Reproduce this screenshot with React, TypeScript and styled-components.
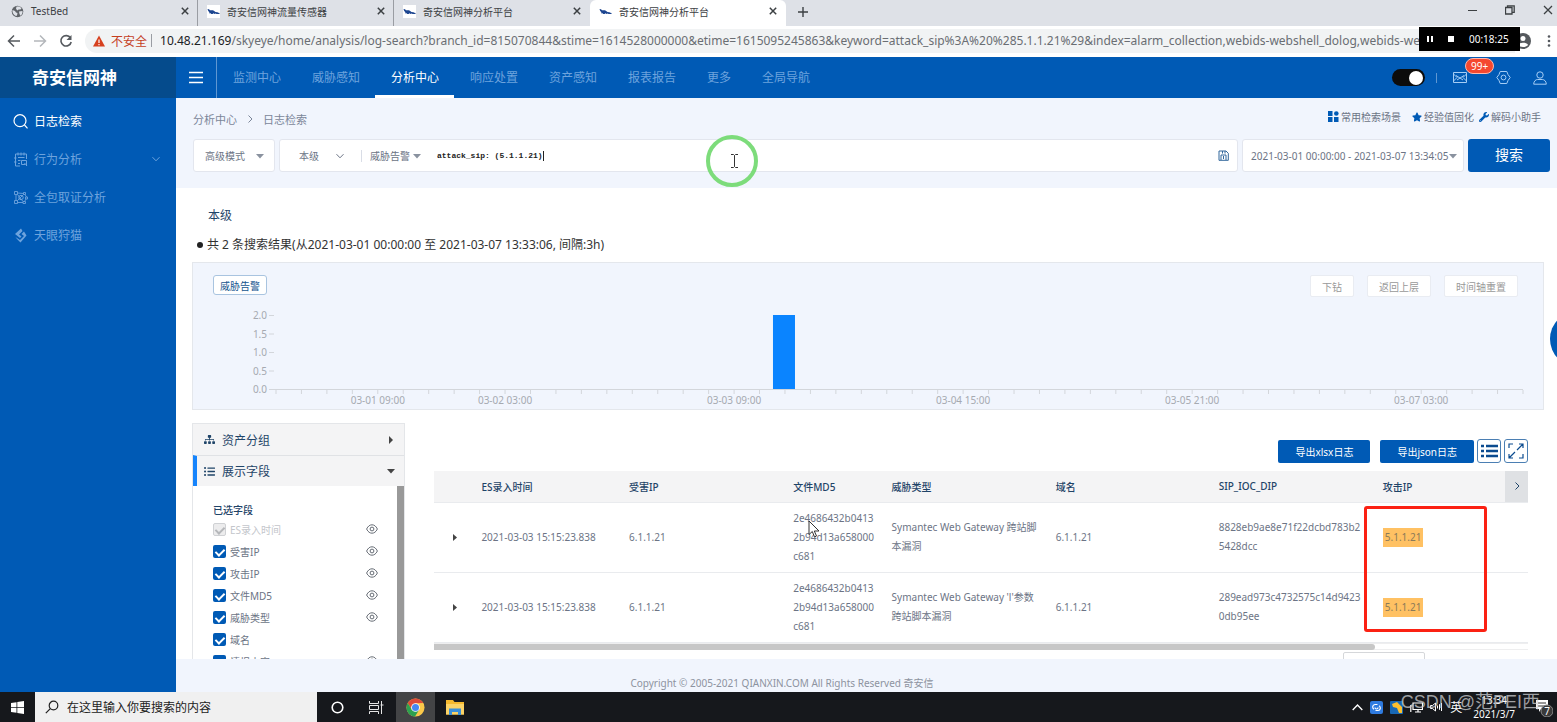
import React from "react";
import styled, { createGlobalStyle, css } from "styled-components";
import { FaListUl, FaSitemap, FaStar, FaWrench } from "react-icons/fa";

const BLUE = "#005ab5";
const PALE = "#f1f5fd";
const INK = "#1f4468";
const BODY = "#6c7485";

const Global = createGlobalStyle`
  * { box-sizing: border-box; }
  html, body, #root { height: 100%; margin: 0; }
  body {
    font-family: "Noto Sans", "Noto Sans CJK SC", sans-serif;
    font-size: 10px;
    color: ${BODY};
    overflow: hidden;
  }
  button, input, select { font: inherit; color: inherit; margin: 0; }
  a { color: inherit; text-decoration: none; }
  svg { display: block; flex: none; }
`;

const Screen = styled.div`
  display: flex;
  flex-direction: column;
  height: 100vh;
  background: #fff;
`;

const PlainButton = styled.button`
  display: flex;
  align-items: center;
  justify-content: center;
  padding: 0;
  border: 0;
  background: none;
  cursor: pointer;
`;

/* ---------- browser ---------- */

const TabStrip = styled.div`
  display: flex;
  flex: none;
  height: 26px;
  padding-left: 2px;
  background: #dee1e7;
  color: #3c4043;
`;

const Tab = styled.div<{ $active?: boolean; $divider?: boolean }>`
  display: flex;
  align-items: center;
  gap: 7px;
  width: 196px;
  padding: 0 9px 4px 9px;
  background: ${(p) => (p.$active ? "#fff" : "transparent")};
  border-radius: ${(p) => (p.$active ? "6px 6px 0 0" : "0")};
  ${(p) => p.$divider && css`box-shadow: inset -1px 0 #9a9da3;`}
`;

const TabTitle = styled.span`
  flex: 1;
  white-space: nowrap;
`;

const NewTab = styled(PlainButton)`
  width: 34px;
  height: 24px;
`;

const WindowControls = styled.div`
  display: flex;
  gap: 28px;
  align-items: center;
  height: 20px;
  margin-left: auto;
  padding-right: 4px;
`;

const AddressBar = styled.div`
  display: flex;
  flex: none;
  align-items: center;
  height: 31px;
  padding: 0 0 2px 7px;
  background: #fff;
`;

const BrowserButtons = styled.div`
  display: flex;
  gap: 12px;
  margin-right: 12px;
`;

const UrlPill = styled.div`
  display: flex;
  flex: 1;
  align-items: center;
  min-width: 0;
  height: 24px;
  padding-left: 7px;
  border-radius: 12px 0 0 12px;
  background: #f1f3f4;
  font-size: 12px;
`;

const Unsafe = styled.span`
  padding: 0 4px 0 5px;
  color: #c5401f;
`;

const UrlRule = styled.span`
  width: 1px;
  height: 13px;
  margin-right: 8px;
  background: #9a9da3;
`;

const Url = styled.span`
  flex: 1;
  min-width: 0;
  overflow: hidden;
  white-space: nowrap;
  color: #6a6e73;
  b { font-weight: 400; color: #202124; }
`;

const Recorder = styled.div`
  position: absolute;
  top: 27px;
  right: 37px;
  display: flex;
  align-items: center;
  gap: 15px;
  width: 101px;
  height: 24px;
  padding-left: 8px;
  background: #000;
  color: #fff;
`;

/* ---------- application header ---------- */

const Header = styled.header`
  display: flex;
  flex: none;
  height: 41px;
  background: ${BLUE};
  color: #fff;
`;

const Brand = styled.div`
  width: 176px;
  padding-left: 32px;
  background: #054b8c;
  font-size: 17px;
  font-weight: 700;
  line-height: 41px;
`;

const Burger = styled(PlainButton)`
  width: 41px;
  border-right: 1px solid #5f97d2;
`;

const Nav = styled.nav`
  display: flex;
`;

const NavLink = styled.a<{ $active?: boolean }>`
  padding: 0 15px 0 16px;
  border-bottom: 3px solid ${(p) => (p.$active ? "#fff" : "transparent")};
  color: ${(p) => (p.$active ? "#fff" : "#6da3dd")};
  font-size: 12px;
  line-height: 41px;
  white-space: nowrap;
`;

const HeaderTools = styled.div`
  display: flex;
  align-items: center;
  margin-left: auto;
  padding-right: 10px;
  color: #a5cdf5;
`;

const Switch = styled.input`
  appearance: none;
  display: flex;
  align-items: center;
  justify-content: flex-end;
  width: 33px;
  height: 17px;
  padding: 1px 2px;
  border-radius: 9px;
  background: #0c0c0c;
  &::before {
    content: "";
    width: 14px;
    height: 14px;
    border-radius: 50%;
    background: #fff;
  }
`;

const ToolRule = styled.span`
  width: 1px;
  height: 10px;
  margin: 0 16px 0 11px;
  background: #5f97d2;
`;

const MailButton = styled(PlainButton)`
  position: relative;
  margin-right: 29px;
`;

const Badge = styled.span`
  position: absolute;
  left: 12px;
  bottom: 9px;
  padding: 0 5px;
  border: 1px solid #ffb9ad;
  border-radius: 8px;
  background: #f5482f;
  color: #fff;
  line-height: 14px;
`;

const UserButton = styled(PlainButton)`
  margin-left: 22px;
`;

/* ---------- body ---------- */

const Body = styled.div`
  display: flex;
  flex: 1;
  min-height: 0;
`;

const Sidebar = styled.nav`
  flex: none;
  width: 176px;
  padding-top: 4px;
  background: ${BLUE};
`;

const SideLink = styled.a<{ $active?: boolean }>`
  display: flex;
  align-items: center;
  gap: 6px;
  height: 38px;
  padding: 0 16px 0 13px;
  color: ${(p) => (p.$active ? "#fff" : "#6da3dd")};
  font-size: 12px;
  span { flex: 1; }
`;

const Content = styled.main`
  display: flex;
  flex: 1;
  flex-direction: column;
  min-width: 0;
  background: ${PALE};
`;

const TopLine = styled.div`
  display: flex;
  flex: none;
  justify-content: space-between;
  align-items: center;
  height: 41px;
  padding: 0 16px 0 17px;
`;

const Crumbs = styled.div`
  display: flex;
  align-items: center;
  gap: 9px;
  color: #7b8699;
  font-size: 11px;
`;

const QuickLinks = styled.div`
  display: flex;
  gap: 5px;
  padding-bottom: 4px;
`;

const QuickLink = styled.a<{ $wide?: boolean }>`
  display: flex;
  align-items: center;
  gap: 2px;
  margin-right: ${(p) => (p.$wide ? "6px" : "0")};
  svg { color: ${BLUE}; }
`;

const SearchRow = styled.div`
  display: flex;
  flex: none;
  gap: 4px;
  padding: 0 7px 16px 17px;
`;

const box = css`
  border: 1px solid #e3e6ee;
  border-radius: 3px;
  background: #fff;
  height: 33px;
`;

const Picker = styled.label<{ $boxed?: boolean; $width: number }>`
  display: grid;
  align-items: center;
  width: ${(p) => p.$width}px;
  ${(p) => p.$boxed && box}
  select, svg { grid-area: 1 / 1; }
  svg { justify-self: end; pointer-events: none; }
`;

const Select = styled.select`
  appearance: none;
  width: 100%;
  padding: 0;
  border: 0;
  outline: 0;
  background: none;
`;

const ModePicker = styled(Picker)`
  padding: 0 10px 0 11px;
`;

const QueryBox = styled.div`
  ${box}
  position: relative;
  display: flex;
  flex: 1;
  align-items: center;
  min-width: 0;
  padding: 0 8px 0 19px;
`;

const QueryRule = styled.span`
  width: 1px;
  height: 12px;
  margin: 0 8px 0 17px;
  background: #d9dde6;
`;

const QueryEdit = styled.label`
  display: flex;
  flex: 1;
  align-items: center;
  margin-left: 16px;
`;

const QueryInput = styled.input`
  width: 22ch;
  padding: 0;
  border: 0;
  outline: 0;
  color: #222;
  font-family: "Liberation Mono", monospace;
  font-size: 8px;
  font-weight: 700;
`;

const Caret = styled.span`
  width: 1px;
  height: 10px;
  background: #222;
`;

const ClickRing = styled.div`
  position: absolute;
  left: 426px;
  top: -5px;
  display: flex;
  align-items: center;
  justify-content: center;
  width: 52px;
  height: 52px;
  padding-left: 4px;
  border: 4px solid #7ddc7b;
  border-radius: 50%;
`;

const DateButton = styled.button`
  ${box}
  display: flex;
  align-items: center;
  justify-content: space-between;
  width: 222px;
  padding: 0 6px 0 8px;
  white-space: nowrap;
`;

const SearchButton = styled.button`
  width: 82px;
  height: 33px;
  padding: 0 0 3px;
  border: 0;
  border-radius: 3px;
  background: ${BLUE};
  color: #fff;
  font-size: 14px;
`;

const Results = styled.section`
  display: flex;
  flex: 1;
  flex-direction: column;
  min-height: 0;
  padding: 18px 13px 0 16px;
  background: #fff;
  overflow: hidden;
`;

const Level = styled.h2`
  margin: 0 0 9px 16px;
  color: ${INK};
  font-size: 12px;
  font-weight: 400;
  line-height: 20px;
`;

const Summary = styled.p`
  display: flex;
  align-items: center;
  gap: 4px;
  margin: 0 0 7px 5px;
  color: #333;
  font-size: 12px;
  line-height: 20px;
  &::before {
    content: "";
    width: 6px;
    height: 6px;
    border-radius: 50%;
    background: #222;
  }
`;

const ChartCard = styled.div`
  flex: none;
  padding-top: 12px;
  border: 1px solid #e4e7ec;
  background: ${PALE};
`;

const ChartBar = styled.div`
  display: flex;
  align-items: flex-start;
  gap: 13px;
  padding: 0 25px 0 20px;
`;

const SeriesButton = styled.button`
  height: 20px;
  margin-right: auto;
  padding: 0 6px;
  border: 1px solid #a9c4e0;
  border-radius: 3px;
  background: #fff;
  color: #17568f;
`;

const ChartAction = styled.button`
  height: 22px;
  padding: 0 11px;
  border: 1px solid #e9ecf2;
  border-radius: 2px;
  background: #fff;
  color: #999;
`;

const Plot = styled.div`
  padding: 0 20px 0 83px;
  svg { overflow: visible; }
  text { font-size: 10px; fill: #a6aab1; }
`;

const Lower = styled.div`
  display: flex;
  flex: 1;
  gap: 29px;
  min-height: 0;
  margin-top: 13px;
`;

const FieldPanel = styled.aside`
  display: flex;
  flex: none;
  flex-direction: column;
  width: 213px;
  border: 1px solid #e4e6e9;
  border-bottom: 0;
`;

const PanelHead = styled.button<{ $open?: boolean }>`
  display: flex;
  flex: none;
  align-items: center;
  gap: 7px;
  height: 31px;
  padding: 0 9px 0 ${(p) => (p.$open ? "7px" : "11px")};
  border: 0;
  border-left: ${(p) => (p.$open ? "4px solid #1684fc" : "0")};
  border-top: ${(p) => (p.$open ? "1px solid #e0e2e5" : "0")};
  background: #f4f4f5;
  color: ${INK};
  font-size: 12px;
  text-align: left;
  span { flex: 1; }
`;

const FieldScroll = styled.div`
  flex: 1;
  min-height: 0;
  padding: 16px 19px 0 20px;
  border-right: 7px solid #999;
  overflow: hidden;
`;

const FieldTitle = styled.h3`
  margin: 0;
  color: ${INK};
  font-size: 10px;
  font-weight: 500;
  line-height: 16px;
`;

const FieldRow = styled.div`
  display: flex;
  align-items: center;
  justify-content: space-between;
  height: 22px;
`;

const FieldLabel = styled.label<{ $off?: boolean }>`
  display: flex;
  align-items: center;
  gap: 4px;
  color: ${(p) => (p.$off ? "#c3c6cb" : BODY)};
`;

const Check = styled.input`
  appearance: none;
  display: flex;
  justify-content: center;
  width: 13px;
  height: 13px;
  padding-top: 2px;
  border-radius: 2px;
  background: ${BLUE};
  &::before {
    content: "";
    width: 4px;
    height: 7px;
    border: solid #fff;
    border-width: 0 2px 2px 0;
    transform: rotate(45deg);
  }
  &:disabled {
    padding-top: 1px;
    border: 1px solid #cfd1d4;
    background: #ececed;
  }
  &:disabled::before { border-color: #b5b7ba; }
`;

const TableSide = styled.div`
  position: relative;
  flex: 1;
  min-width: 0;
  padding: 16px 16px 0 0;
`;

const Exports = styled.div`
  display: flex;
  justify-content: flex-end;
  align-items: center;
  gap: 3px;
  margin-bottom: 8px;
`;

const ExportButton = styled.button`
  height: 23px;
  margin-left: 7px;
  padding: 0 17px;
  border: 0;
  border-radius: 2px;
  background: ${BLUE};
  color: #fff;
`;

const ViewButton = styled(PlainButton)`
  width: 24px;
  height: 24px;
  border: 1px solid #4b7fb3;
  border-radius: 3px;
  background: #fff;
  color: #0b4b8f;
`;

const Table = styled.table`
  width: 100%;
  table-layout: fixed;
  border-collapse: collapse;
  tr { border-bottom: 1px solid #e9ebee; }
  th, td { padding: 0 8px; text-align: left; }
  th {
    height: 31px;
    background: #f4f4f5;
    color: ${INK};
    font-weight: 500;
  }
  td {
    height: 70px;
    line-height: 19px;
    overflow-wrap: anywhere;
  }
`;

const HashCell = styled.td`
  && { padding-right: 13px; }
`;

const MoreCell = styled.th`
  && { padding: 0; background: #dfe1e4; }
`;

const Mark = styled.mark`
  display: inline-block;
  padding: 0 2px;
  background: #ffc163;
  color: #8a7a58;
`;

const HScroll = styled.div`
  height: 7px;
  border: 1px solid #eeeeef;
  border-width: 1px 0;
  &::before {
    content: "";
    display: block;
    width: 86%;
    height: 6px;
    border-radius: 0 3px 3px 0;
    background: #c7c7c7;
  }
`;

const PageSize = styled.div`
  width: 82px;
  height: 22px;
  margin: 2px 103px 0 auto;
  border: 1px solid #d5d7da;
  border-radius: 2px;
`;

const RedFrame = styled.div`
  position: absolute;
  top: 83px;
  right: 57px;
  width: 123px;
  height: 126px;
  border: 3px solid #fb2113;
  border-radius: 3px;
`;

const Pointer = styled.div`
  position: absolute;
  top: 97px;
  left: 374px;
`;

const Footer = styled.footer`
  flex: none;
  height: 33px;
  padding: 10px 0 0 7px;
  margin-right: 176px;
  color: #8d93a0;
  line-height: 28px;
  text-align: center;
`;

const HelpBubble = styled.button`
  position: absolute;
  top: 311px;
  right: -49px;
  width: 56px;
  height: 56px;
  border: 0;
  border-radius: 50%;
  background: ${BLUE};
`;

/* ---------- taskbar ---------- */

const Taskbar = styled.div`
  position: relative;
  display: flex;
  flex: none;
  align-items: stretch;
  height: 30px;
  background: #16181c;
  color: #fff;
`;

const TaskButton = styled(PlainButton)<{ $on?: boolean }>`
  width: 39px;
  background: ${(p) => (p.$on ? "#434446" : "transparent")};
`;

const StartButton = styled(TaskButton)`
  width: 35px;
`;

const TaskSearch = styled.label`
  display: flex;
  align-items: center;
  gap: 8px;
  width: 282px;
  margin-right: 1px;
  padding: 0 10px;
  background: #f0f0f0;
  color: #222;
  input {
    flex: 1;
    min-width: 0;
    padding: 0;
    border: 0;
    background: none;
    font-size: 12px;
  }
  input::placeholder { color: #222; opacity: 1; }
`;

const Tray = styled.div`
  display: flex;
  align-items: center;
  gap: 7px;
  margin-left: auto;
  padding-right: 4px;
  font-size: 12px;
`;

const Clock = styled.time`
  padding: 0 13px 0 4px;
  font-size: 10px;
  line-height: 14px;
  text-align: center;
`;

const Watermark = styled.span`
  position: absolute;
  right: 17px;
  bottom: 6px;
  color: rgba(205, 207, 210, 0.75);
  font-family: "Liberation Sans", "Noto Sans CJK SC", sans-serif;
  font-size: 18px;
  line-height: 28px;
  white-space: nowrap;
`;

/* ---------- drawings ---------- */

const line = { fill: "none", stroke: "currentColor", strokeWidth: 1 } as const;

const Cross = ({ size = 8, w = 1.5 }: { size?: number; w?: number }) => (
  <svg width={size} height={size} viewBox="0 0 8 8">
    <path d="M.8.8l6.4 6.4M7.2.8L.8 7.2" {...line} strokeWidth={w} />
  </svg>
);

const Globe = () => (
  <svg width="13" height="13" viewBox="0 0 13 13">
    <circle cx="6.5" cy="6.5" r="5.8" fill="#5f6368" />
    <path d="M1.500 5l2.500 1 1 1.500 1.500.5-.5 2.500-1 .5C2.500 10 1 7.500 1.500 5zM5.500 1.500h3l2 1.800-1 1.200-2 0-.8 1-1.700-1.500zM8 6.500l3.500-.5c.3 2-.7 4-2 4.800L8.500 9z" fill="#dee1e7" />
  </svg>
);

const Favicon = () => (
  <svg width="13" height="13" viewBox="0 0 13 13">
    <rect width="13" height="13" fill="#fff" />
    <path d="M.5 4l1.500.3 1 .9 3 .1 1.500.9 1 .8 2 .2.8.6 1.200.2v.9H9.500l-.8-.5-1.200.6-1-.7-.8.7H4.200l-.4-.7-1.300.3-.3-1.500L1.200 6z" fill="#1c4590" />
  </svg>
);

const Triangle = ({ dir = "down", color = "#8a929f" }: { dir?: "down" | "right"; color?: string }) => (
  <svg width="8" height="8" viewBox="0 0 8 8">
    <path d={dir === "down" ? "M0 2h8L4 6.500z" : "M2 0v8l4-4z"} fill={color} />
  </svg>
);

const Chevron = ({ dir = "down", size = 8 }: { dir?: "down" | "right" | "up"; size?: number }) => (
  <svg width={size} height={size} viewBox="0 0 8 8">
    <path
      d={dir === "down" ? "M.5 2.200L4 5.800l3.500-3.600" : dir === "up" ? "M.5 5.800L4 2.200l3.500 3.600" : "M2.500.5L6 4 2.500 7.500"}
      {...line}
    />
  </svg>
);

const Eye = () => (
  <svg width="12" height="10" viewBox="0 0 12 10">
    <path d="M.6 5C2 2 4 .8 6 .8S10 2 11.400 5C10 8 8 9.200 6 9.200S2 8 .6 5z" fill="none" stroke="#555b65" strokeWidth=".9" />
    <circle cx="6" cy="5" r="1.900" fill="none" stroke="#555b65" strokeWidth=".9" />
  </svg>
);

const Chrome = () => (
  <svg width="19" height="19" viewBox="0 0 20 20">
    <circle cx="10" cy="10" r="9.500" fill="#fbc94a" />
    <path d="M1.800 5.200A9.500 9.500 0 0 1 18.200 5.300L10 5.500 6 12z" fill="#dd4b3a" />
    <path d="M1.800 5.200A9.500 9.500 0 0 0 9.500 19.500L14 12.200 6.300 12.500z" fill="#2da150" />
    <circle cx="10" cy="10" r="4.600" fill="#fff" />
    <circle cx="10" cy="10" r="3.700" fill="#4688f1" />
  </svg>
);

/* ---------- data ---------- */

const NAV = ["监测中心", "威胁感知", "分析中心", "响应处置", "资产感知", "报表报告", "更多", "全局导航"];

const FIELDS = [
  { name: "ES录入时间", eye: true, off: true },
  { name: "受害IP", eye: true },
  { name: "攻击IP", eye: true },
  { name: "文件MD5", eye: true },
  { name: "威胁类型", eye: true },
  { name: "域名", eye: false },
  { name: "情报内容", eye: true },
];

const ROWS = [
  {
    time: "2021-03-03 15:15:23.838",
    victim: "6.1.1.21",
    md5: "2e4686432b04132b94d13a658000c681",
    threat: "Symantec Web Gateway 跨站脚本漏洞",
    domain: "6.1.1.21",
    ioc: "8828eb9ae8e71f22dcbd783b25428dcc",
    attacker: "5.1.1.21",
  },
  {
    time: "2021-03-03 15:15:23.838",
    victim: "6.1.1.21",
    md5: "2e4686432b04132b94d13a658000c681",
    threat: "Symantec Web Gateway 'l'参数跨站脚本漏洞",
    domain: "6.1.1.21",
    ioc: "289ead973c4732575c14d94230db95ee",
    attacker: "5.1.1.21",
  },
];

const BINS = 49;
const X_LABELS: [number, string][] = [
  [4, "03-01 09:00"],
  [9, "03-02 03:00"],
  [18, "03-03 09:00"],
  [27, "03-04 15:00"],
  [36, "03-05 21:00"],
  [45, "03-07 03:00"],
];
const Y_LABELS = ["2.0", "1.5", "1.0", "0.5", "0.0"];
const at = (bin: number) => `${(bin / BINS) * 100}%`;

function Histogram() {
  return (
    <svg width="100%" height="112" role="img" aria-label="威胁告警">
      <g stroke="#d3d6db">
        {Y_LABELS.map((l, i) => (
          <line key={l} x1="-7" x2="-2" y1={18.5 + i * 18.5} y2={18.5 + i * 18.5} />
        ))}
        <line x1="-2" x2="100%" y1="92.5" y2="92.5" />
        {Array.from({ length: BINS + 1 }, (_, i) => (
          <line key={i} x1={at(i)} x2={at(i)} y1="93" y2="97" />
        ))}
      </g>
      {Y_LABELS.map((l, i) => (
        <text key={l} x="-9" y={22 + i * 18.5} textAnchor="end">{l}</text>
      ))}
      {X_LABELS.map(([bin, l]) => (
        <text key={l} x={at(bin)} y="107" textAnchor="middle">{l}</text>
      ))}
      <svg x={at(20)} y="18" width="1" height="74" overflow="visible">
        <rect x="-12" width="22" height="74" fill="#0a84ff" />
      </svg>
    </svg>
  );
}

export default function App() {
  return (
    <Screen>
      <Global />

      <TabStrip>
        <Tab $divider><Globe /><TabTitle>TestBed</TabTitle><Cross /></Tab>
        <Tab $divider><Favicon /><TabTitle>奇安信网神流量传感器</TabTitle><Cross /></Tab>
        <Tab><Favicon /><TabTitle>奇安信网神分析平台</TabTitle><Cross /></Tab>
        <Tab $active><Favicon /><TabTitle>奇安信网神分析平台</TabTitle><Cross /></Tab>
        <NewTab aria-label="新标签页">
          <svg width="10" height="10" viewBox="0 0 10 10"><path d="M5 0v10M0 5h10" {...line} strokeWidth={1.4} /></svg>
        </NewTab>
        <WindowControls>
          <PlainButton aria-label="最小化"><svg width="9" height="9"><path d="M0 4.500h9" {...line} /></svg></PlainButton>
          <PlainButton aria-label="还原">
            <svg width="10" height="10"><path d="M.5 2.500h6.500v6.500H.5zM2.500 2.500V.8h6.700v6.500H7" {...line} strokeWidth={1.300} /></svg>
          </PlainButton>
          <PlainButton aria-label="关闭"><Cross size={10} w={1} /></PlainButton>
        </WindowControls>
      </TabStrip>

      <AddressBar>
        <BrowserButtons>
          <PlainButton aria-label="后退">
            <svg width="14" height="14" viewBox="0 0 14 14"><path d="M13 7H2M7 1.500L1.500 7 7 12.500" {...line} stroke="#55595e" strokeWidth={1.500} /></svg>
          </PlainButton>
          <PlainButton aria-label="前进">
            <svg width="14" height="14" viewBox="0 0 14 14"><path d="M1 7h11M7 1.500L12.500 7 7 12.500" {...line} stroke="#b4b7bb" strokeWidth={1.500} /></svg>
          </PlainButton>
          <PlainButton aria-label="刷新">
            <svg width="14" height="14" viewBox="0 0 14 14">
              <path d="M11.500 4A5.200 5.200 0 1 0 12.200 8" {...line} stroke="#55595e" strokeWidth={1.600} />
              <path d="M12.500 1v5h-5z" fill="#55595e" />
            </svg>
          </PlainButton>
        </BrowserButtons>
        <UrlPill>
          <svg width="14" height="12" viewBox="0 0 14 12">
            <path d="M7 .5L13 11.500H1z" fill="#d6401f" />
            <path d="M7 4.500v3.500M7 9v1.200" stroke="#fff" strokeWidth="1.200" />
          </svg>
          <Unsafe>不安全</Unsafe>
          <UrlRule />
          <Url>
            <b>10.48.21.169</b>/skyeye/home/analysis/log-search?branch_id=815070844&amp;stime=1614528000000&amp;etime=1615095245863&amp;keyword=attack_sip%3A%20%285.1.1.21%29&amp;index=alarm_collection,webids-webshell_dolog,webids-webattack
          </Url>
        </UrlPill>
        <PlainButton aria-label="用户">
          <svg width="16" height="16" viewBox="0 0 16 16">
            <circle cx="8" cy="8" r="8" fill="#55595e" />
            <circle cx="8" cy="5.500" r="2.500" fill="#fff" />
            <path d="M3 12c1-3 9-3 10 0-2 2.600-8 2.600-10 0z" fill="#fff" />
          </svg>
        </PlainButton>
        <PlainButton aria-label="菜单">
          <svg width="26" height="14" viewBox="0 0 26 14" fill="#55595e">
            <circle cx="18" cy="2.500" r="1.300" /><circle cx="18" cy="7" r="1.300" /><circle cx="18" cy="11.500" r="1.300" />
          </svg>
        </PlainButton>
      </AddressBar>
      <Recorder>
        <svg width="6" height="6"><path d="M1 0v6M5 0v6" stroke="#fff" strokeWidth="2" /></svg>
        <svg width="6" height="6"><rect width="6" height="6" fill="#fff" /></svg>
        <span>00:18:25</span>
      </Recorder>

      <Header>
        <Brand>奇安信网神</Brand>
        <Burger aria-label="展开菜单">
          <svg width="14" height="13"><path d="M0 1.500h14M0 6.500h14M0 11.500h14" stroke="#fff" strokeWidth="1.300" /></svg>
        </Burger>
        <Nav>
          {NAV.map((n) => <NavLink key={n} href="#" $active={n === "分析中心"}>{n}</NavLink>)}
        </Nav>
        <HeaderTools>
          <Switch type="checkbox" role="switch" aria-label="切换" defaultChecked />
          <ToolRule />
          <MailButton aria-label="消息">
            <svg width="14" height="11" viewBox="0 0 14 11">
              <path d="M.5.5h13v10H.5zM.5 2l3.500 3.500L.5 9M13.500 2L10 5.500 13.500 9M3 3.500l4 2.500 4-2.500M4 8l3-2 3 2" {...line} />
            </svg>
            <Badge>99+</Badge>
          </MailButton>
          <PlainButton aria-label="设置">
            <svg width="15" height="15" viewBox="0 0 15 15">
              <path d="M4.200 1.500h6.600L12 4.500l2.200 3-2.200 3-1.200 3H4.200L3 10.500.8 7.500 3 4.500z" {...line} />
              <circle cx="7.500" cy="7.500" r="2.400" {...line} />
            </svg>
          </PlainButton>
          <UserButton aria-label="账户">
            <svg width="14" height="14" viewBox="0 0 14 14">
              <circle cx="7" cy="4" r="3.200" {...line} />
              <path d="M.7 13.200c0-3 2-4.700 4-4.700h4.600c2 0 4 1.700 4 4.700z" {...line} />
            </svg>
          </UserButton>
        </HeaderTools>
      </Header>

      <Body>
        <Sidebar>
          <SideLink href="#" $active>
            <svg width="15" height="15" viewBox="0 0 15 15"><circle cx="7" cy="6.700" r="6" {...line} strokeWidth={1.200} /><path d="M11.500 11l3 3.300" {...line} strokeWidth={1.200} /></svg>
            <span>日志检索</span>
          </SideLink>
          <SideLink href="#">
            <svg width="15" height="15" viewBox="0 0 15 15">
              <path d="M13.500 7V2H2.500v12H7M5 .5v3M8 .5v3M11 .5v3M1 6h2.500M1 10h2.500M5 5.500h6.500M5 8.500h2.500M5 11.500h2" {...line} />
              <path d="M13.500 14V8.500H8.500v4h3.500M11.500 11l2.500 3" {...line} />
            </svg>
            <span>行为分析</span><Chevron />
          </SideLink>
          <SideLink href="#">
            <svg width="15" height="15" viewBox="0 0 15 15">
              <path d="M1.500 1.500h3v3h-3zM1.500 10.500h3v3h-3zM10.500 2.500h2v2h-2zM12.500 7h2v2h-2zM10 11.500h2.500v2H10zM3 4.500v6M4.500 3l6 .5M12 4.500l1.500 2.500M13 9l-1.500 2.500M4.500 12.500H10M4.500 4.500l5.500 7M4.500 10.500l6-6" {...line} strokeWidth={0.9} />
              <circle cx="8" cy="7.500" r="2.200" {...line} />
            </svg>
            <span>全包取证分析</span>
          </SideLink>
          <SideLink href="#">
            <svg width="15" height="15" viewBox="0 0 15 15">
              <path d="M8 .5L9.500 3 6 6.500l2.500 2L7 10 2 6zM11 3.500l2.500 4-6 7L4 11l-1.500-2L7 12l4-4-2.500-2z" fill="currentColor" />
            </svg>
            <span>天眼狩猫</span>
          </SideLink>
        </Sidebar>

        <Content>
          <TopLine>
            <Crumbs><a href="#">分析中心</a><Chevron dir="right" /><span>日志检索</span></Crumbs>
            <QuickLinks>
              <QuickLink href="#" $wide>
                <svg width="11" height="11" viewBox="0 0 11 11" fill="currentColor">
                  <rect width="4.500" height="5" /><rect y="6" width="4.500" height="5" /><circle cx="8.300" cy="2.500" r="2.300" /><rect x="6" y="6" width="4.500" height="5" />
                </svg>
                常用检索场景
              </QuickLink>
              <QuickLink href="#"><FaStar size={10} />经验值固化</QuickLink>
              <QuickLink href="#"><FaWrench size={10} />解码小助手</QuickLink>
            </QuickLinks>
          </TopLine>

          <SearchRow>
            <ModePicker $boxed $width={82}>
              <Select aria-label="模式"><option>高级模式</option></Select>
              <Triangle />
            </ModePicker>
            <QueryBox>
              <Picker $width={45}>
                <Select aria-label="级别"><option>本级</option></Select>
                <Chevron />
              </Picker>
              <QueryRule />
              <Picker $width={51}>
                <Select aria-label="类型"><option>威胁告警</option></Select>
                <Triangle />
              </Picker>
              <QueryEdit>
                <QueryInput aria-label="检索语句" defaultValue="attack_sip: (5.1.1.21)" />
                <Caret />
              </QueryEdit>
              <PlainButton aria-label="保存">
                <svg width="11" height="11" viewBox="0 0 11 11" color="#31679c">
                  <path d="M1 1h7l2.300 2.300V10.300H1zM3 10V5h5v5M4.500 1v2.500M7 1v2.500M5.500 6v3" {...line} />
                </svg>
              </PlainButton>
              <ClickRing>
                <svg width="7" height="14" viewBox="0 0 7 14"><path d="M0 .5h2.500l1 1 1-1H7M0 13.500h2.500l1-1 1 1H7M3.500 1.500v11" fill="none" stroke="#333" /></svg>
              </ClickRing>
            </QueryBox>
            <DateButton>2021-03-01 00:00:00 - 2021-03-07 13:34:05<Triangle /></DateButton>
            <SearchButton>搜索</SearchButton>
          </SearchRow>

          <Results>
            <Level>本级</Level>
            <Summary>共 2 条搜索结果(从2021-03-01 00:00:00 至 2021-03-07 13:33:06, 间隔:3h)</Summary>

            <ChartCard>
              <ChartBar>
                <SeriesButton>威胁告警</SeriesButton>
                <ChartAction>下钻</ChartAction>
                <ChartAction>返回上层</ChartAction>
                <ChartAction>时间轴重置</ChartAction>
              </ChartBar>
              <Plot><Histogram /></Plot>
            </ChartCard>

            <Lower>
              <FieldPanel>
                <PanelHead><FaSitemap size={11} /><span>资产分组</span><Triangle dir="right" color="#444" /></PanelHead>
                <PanelHead $open><FaListUl size={11} /><span>展示字段</span><Triangle color="#444" /></PanelHead>
                <FieldScroll>
                  <FieldTitle>已选字段</FieldTitle>
                  {FIELDS.map((f) => (
                    <FieldRow key={f.name}>
                      <FieldLabel $off={f.off}>
                        <Check type="checkbox" defaultChecked disabled={f.off} />
                        {f.name}
                      </FieldLabel>
                      {f.eye && <PlainButton aria-label={`显示${f.name}`}><Eye /></PlainButton>}
                    </FieldRow>
                  ))}
                </FieldScroll>
              </FieldPanel>

              <TableSide>
                <Exports>
                  <ExportButton>导出xlsx日志</ExportButton>
                  <ExportButton>导出json日志</ExportButton>
                  <ViewButton aria-label="列表">
                    <svg width="17" height="14" viewBox="0 0 17 14">
                      <path d="M0 2h3M0 7h3M0 12h3M5 2h12M5 7h12M5 12h12" stroke="currentColor" strokeWidth="2.600" />
                    </svg>
                  </ViewButton>
                  <ViewButton aria-label="全屏">
                    <svg width="16" height="16" viewBox="0 0 16 16">
                      <path d="M1 5V1h4M11 1h4v4M15 11v4h-4M5 15H1v-4M15 1L9 7M1 15l6-6" {...line} strokeWidth={1.200} />
                    </svg>
                  </ViewButton>
                </Exports>
                <Table>
                  <colgroup>
                    <col style={{ width: "3.6%" }} />
                    <col style={{ width: "13.5%" }} />
                    <col style={{ width: "15%" }} />
                    <col style={{ width: "9%" }} />
                    <col style={{ width: "15%" }} />
                    <col style={{ width: "14.9%" }} />
                    <col style={{ width: "15%" }} />
                    <col />
                    <col style={{ width: "2.1%" }} />
                  </colgroup>
                  <thead>
                    <tr>
                      <th />
                      <th>ES录入时间</th>
                      <th>受害IP</th>
                      <th>文件MD5</th>
                      <th>威胁类型</th>
                      <th>域名</th>
                      <th>SIP_IOC_DIP</th>
                      <th>攻击IP</th>
                      <MoreCell>
                        <PlainButton aria-label="更多列" style={{ width: "100%" }}><Chevron dir="right" /></PlainButton>
                      </MoreCell>
                    </tr>
                  </thead>
                  <tbody>
                    {ROWS.map((r) => (
                      <tr key={r.ioc}>
                        <td><PlainButton aria-label="展开" style={{ marginLeft: "auto" }}><svg width="14" height="7" viewBox="0 0 14 7"><path d="M2 0v7l4-3.500z" fill="#444" /></svg></PlainButton></td>
                        <td>{r.time}</td>
                        <td>{r.victim}</td>
                        <td>{r.md5}</td>
                        <td>{r.threat}</td>
                        <td>{r.domain}</td>
                        <HashCell>{r.ioc}</HashCell>
                        <td colSpan={2}><Mark>{r.attacker}</Mark></td>
                      </tr>
                    ))}
                  </tbody>
                </Table>
                <HScroll />
                <PageSize />
                <RedFrame />
                <Pointer>
                  <svg width="12" height="18" viewBox="0 0 12 18"><path d="M1 1v13.500l3.300-3L6.500 17l2-1-2.200-5H11z" fill="#fff" stroke="#333" /></svg>
                </Pointer>
              </TableSide>
            </Lower>
          </Results>
          <Footer>Copyright © 2005-2021 QIANXIN.COM All Rights Reserved 奇安信</Footer>
        </Content>
      </Body>
      <HelpBubble aria-label="帮助" />

      <Taskbar>
        <StartButton aria-label="开始">
          <svg width="13" height="13" viewBox="0 0 13 13"><path d="M0 2l5.500-.8V6H0zM6.300 1L13 0v6H6.300zM0 6.800h5.500v5L0 11zM6.300 6.800H13V13l-6.700-1z" fill="#fff" /></svg>
        </StartButton>
        <TaskSearch>
          <svg width="14" height="14" viewBox="0 0 14 14"><circle cx="8.500" cy="5.500" r="4.300" {...line} strokeWidth={1.200} /><path d="M5.300 8.700L.8 13.200" {...line} strokeWidth={1.200} /></svg>
          <input aria-label="搜索" placeholder="在这里输入你要搜索的内容" />
        </TaskSearch>
        <TaskButton aria-label="Cortana">
          <svg width="13" height="13"><circle cx="6.500" cy="6.500" r="5.300" fill="none" stroke="#fff" strokeWidth="1.600" /></svg>
        </TaskButton>
        <TaskButton aria-label="任务视图">
          <svg width="15" height="13" viewBox="0 0 15 13"><path d="M.5 0v2.500h9V0M.5 4.500h9v4h-9zM.5 13v-2.500h9V13M12.500 0v13M11.500 4h3" fill="none" stroke="#e5e5e5" /></svg>
        </TaskButton>
        <TaskButton aria-label="Chrome" $on><Chrome /></TaskButton>
        <TaskButton aria-label="文件资源管理器">
          <svg width="18" height="15" viewBox="0 0 18 15">
            <path d="M0 0h7l1.500 2H18v12.500H0z" fill="#f5b92f" /><path d="M0 4h18v10.500H0z" fill="#fbd367" />
            <path d="M3 15V8.500h12V15h-3v-3H6v3z" fill="#3b8fd9" />
          </svg>
        </TaskButton>
        <Tray>
          <Chevron dir="up" size={11} />
          <svg width="13" height="13" viewBox="0 0 13 13">
            <rect width="13" height="13" rx="2" fill="#2f7be0" />
            <path d="M7.500 3.500H5a2.500 2.500 0 0 0-1 4.700M5.500 9.500H8a2.500 2.500 0 0 0 1-4.700M5 6.500a1.500 1.500 0 0 0 3 0" fill="none" stroke="#fff" strokeWidth="1.200" />
          </svg>
          <svg width="13" height="13" viewBox="0 0 13 13"><rect width="13" height="13" rx="1" fill="#1868b5" /><path d="M2 3l5-2 5 5v6H9L7 7 3 6z" fill="#fcc02e" /></svg>
          <svg width="13" height="12" viewBox="0 0 13 12"><path d="M3 2h9.500v6.500H3zM5 11h6M8 8.500V11M.8 4v7" {...line} strokeWidth={1.200} /></svg>
          <svg width="13" height="12" viewBox="0 0 13 12"><path d="M.5 4.500h2L5.500 2v8L2.500 7.500h-2zM7.500 4.500v3M9.500 3.200v5.600M11.500 2v8" {...line} /></svg>
          <span>英</span>
          <Clock>13:34<br />2021/3/7</Clock>
          <svg width="18" height="20" viewBox="0 0 18 20">
            <path d="M1 3h12v9H6l-2 3v-3H1z" fill="#fff" /><path d="M3 6h8M3 9h8" stroke="#333" />
            <circle cx="12" cy="14" r="6" fill="#3a3a3a" stroke="#8a8a8a" />
            <text x="12" y="18" fill="#fff" fontSize="10" textAnchor="middle">7</text>
          </svg>
        </Tray>
        <Watermark>CSDN @范PEI西</Watermark>
      </Taskbar>
    </Screen>
  );
}
